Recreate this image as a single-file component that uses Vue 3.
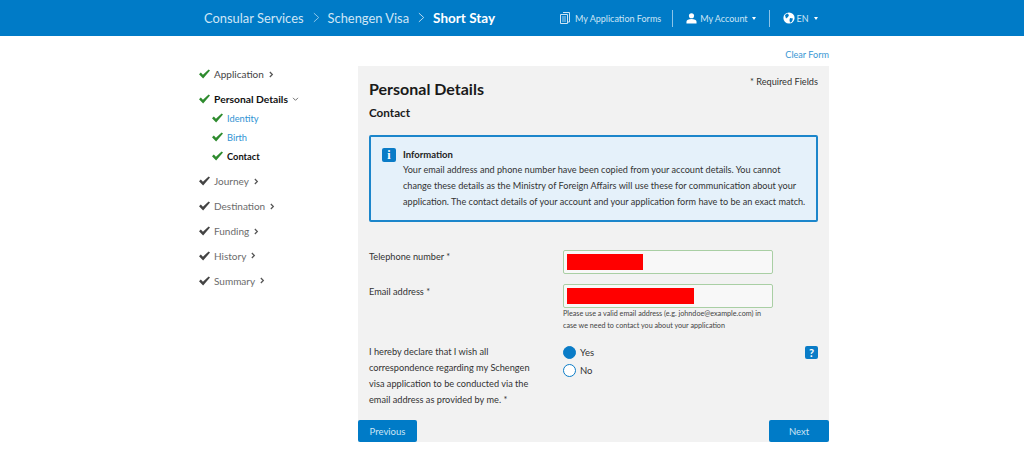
<script setup>
const mainTop = [{ t: 'Application', done: true }];
const subs = [
  { t: 'Identity', cls: 'link' },
  { t: 'Birth', cls: 'link' },
  { t: 'Contact', cls: 'cur' }
];
const rest = ['Journey', 'Destination', 'Funding', 'History', 'Summary'];
const tick = 'M0 5.200L2 3.400L4.300 5.700L10.500 0L12 1.300L4.500 10Z';
</script>

<template>
  <div class="page">
    <header class="top">
      <nav class="crumbs">
        <span class="c1">Consular Services</span>
        <svg class="sep" viewBox="0 0 8 12" width="7" height="11"><path d="M1 1l5.5 5L1 11" fill="none" stroke="#9fd0ee" stroke-width="1"/></svg>
        <span class="c2">Schengen Visa</span>
        <svg class="sep" viewBox="0 0 8 12" width="7" height="11"><path d="M1 1l5.5 5L1 11" fill="none" stroke="#cfe6f6" stroke-width="1"/></svg>
        <strong class="c3">Short Stay</strong>
      </nav>
      <div class="tools">
        <span class="tool t1">
          <svg viewBox="0 0 10 12" width="10" height="12"><path d="M3 .5h6.5v9.5H8M.5 2.5H7.5v9H.5z" fill="none" stroke="#cde5f5" stroke-width="1"/><path d="M2 5h4M2 7h4M2 9h4" stroke="#cde5f5" stroke-width=".8"/></svg>
          My Application Forms
        </span>
        <i class="div"></i>
        <span class="tool t2">
          <svg viewBox="0 0 12 12" width="11" height="11"><circle cx="6" cy="3" r="2.8" fill="#fff"/><path d="M.5 11.5V9.6C.5 7.6 3 6.6 6 6.6s5.500 1 5.500 3v1.900z" fill="#fff"/></svg>
          My Account
          <b class="caret"></b>
        </span>
        <i class="div"></i>
        <span class="tool t3">
          <svg viewBox="0 0 12 12" width="12" height="12"><circle cx="6" cy="6" r="5.600" fill="#fff"/><path d="M2 3l2.500-1.500L6 3 5 5 3 6.500zM7 6l3 .5-1 3-2 1.200L6.500 8z" fill="#007bc7"/></svg>
          EN
          <b class="caret"></b>
        </span>
      </div>
    </header>

    <div class="clear-row"><a class="clear">Clear Form</a></div>

    <div class="body">
      <aside class="side">
        <div v-for="m in mainTop" :key="m.t" class="item green">
          <svg class="tick" viewBox="0 0 12 10" width="11" height="10"><path :d="tick" fill="#2e8b2e"/></svg>
          <span>{{ m.t }}</span>
          <svg class="chev" viewBox="0 0 6 8" width="5" height="7"><path d="M1 1l3 3-3 3" fill="none" stroke="#555" stroke-width="1.500"/></svg>
        </div>
        <div class="item green active">
          <svg class="tick" viewBox="0 0 12 10" width="11" height="10"><path :d="tick" fill="#2e8b2e"/></svg>
          <span>Personal Details</span>
          <svg class="chev down" viewBox="0 0 8 6" width="7" height="5"><path d="M1 1l3 3 3-3" fill="none" stroke="#555" stroke-width="1"/></svg>
        </div>
        <div class="subs">
          <div v-for="s in subs" :key="s.t" class="sub" :class="s.cls">
            <svg class="tick" viewBox="0 0 12 10" width="11" height="10"><path :d="tick" fill="#2e8b2e"/></svg>
            <span>{{ s.t }}</span>
          </div>
        </div>
        <div class="rest">
          <div v-for="r in rest" :key="r" class="item grey">
            <svg class="tick" viewBox="0 0 12 10" width="11" height="10"><path :d="tick" fill="#444"/></svg>
            <span>{{ r }}</span>
            <svg class="chev" viewBox="0 0 6 8" width="5" height="7"><path d="M1 1l3 3-3 3" fill="none" stroke="#555" stroke-width="1.500"/></svg>
          </div>
        </div>
      </aside>

      <main class="panel">
        <div class="inner">
          <div class="head">
            <h1>Personal Details</h1>
            <span class="req">* Required Fields</span>
          </div>
          <h2>Contact</h2>
          <section class="info">
            <span class="info-ic">i</span>
            <div>
              <h3>Information</h3>
              <p>Your email address and phone number have been copied from your account details. You cannot<br>change these details as the Ministry of Foreign Affairs will use these for communication about your<br>application. The contact details of your account and your application form have to be an exact match.</p>
            </div>
          </section>
          <div class="row r-tel">
            <label>Telephone number *</label>
            <div class="field"><div class="input"><span class="red w1"></span></div></div>
          </div>
          <div class="row r-mail">
            <label>Email address *</label>
            <div class="field">
              <div class="input"><span class="red w2"></span></div>
              <p class="help">Please use a valid email address (e.g. johndoe@example.com) in<br>case we need to contact you about your application</p>
            </div>
          </div>
          <div class="row r-decl">
            <label class="decl">I hereby declare that I wish all<br>correspondence regarding my Schengen<br>visa application to be conducted via the<br>email address as provided by me. *</label>
            <div class="radios">
              <div class="radio"><i class="dot on"></i>Yes</div>
              <div class="radio"><i class="dot"></i>No</div>
            </div>
            <span class="q">?</span>
          </div>
        </div>
        <div class="btns">
          <button class="prev">Previous</button>
          <button class="next">Next</button>
        </div>
      </main>
    </div>
  </div>
</template>

<style scoped>
.page { width: 1024px; height: 469px; overflow: hidden; background: #fff; color: #333; font-family: Lato, "Noto Sans", sans-serif; font-size: 9.200px; }
.top { height: 36px; background: #007bc7; display: flex; align-items: center; padding-left: 204px; }
.crumbs { display: flex; align-items: center; font-size: 12.900px; color: #cfe6f6; width: 356px; padding-bottom: 1px; box-sizing: border-box; }
.sep { margin: 0 8px 0 9px; }
.crumbs .c3 { color: #fff; font-weight: 700; font-size: 13.500px; }
.tools { display: flex; align-items: center; font-size: 9px; color: #cde5f5; }
.tool { display: flex; align-items: center; gap: 5px; }
.div { width: 1px; height: 17px; background: #8cc4e8; margin: 0 13px; }
.t1 + .div { margin-left: 11px; }
.caret { width: 0; height: 0; border: 2.500px solid transparent; border-top: 3px solid #fff; border-bottom: 0; margin-left: -1px; }
.t2 { gap: 3px; }
.t2 .caret { margin-left: 1px; }
.t3 { gap: 2px; }
.t3 .caret { margin-left: 3px; }
.clear-row { width: 829px; height: 30px; display: flex; justify-content: flex-end; align-items: center; padding-top: 6px; box-sizing: border-box; }
.clear { color: #3a97d4; font-size: 9.100px; }
.body { display: flex; padding-left: 199px; }
.side { width: 159px; margin-top: -4px; }
.item { height: 24.900px; display: flex; align-items: center; font-size: 10px; color: #444; }
.tick { margin-right: 4px; flex: none; }
.chev { margin-left: 5px; }
.active { font-weight: 700; color: #111; font-size: 10.300px; }
.chev.down { margin-left: 4px; }
.subs { padding-left: 13px; margin-top: -3px; }
.sub { height: 19px; display: flex; align-items: center; font-size: 9.300px; }
.link { color: #2f93d3; }
.cur { color: #111; font-weight: 700; }
.rest { margin-top: 3px; }
.grey { color: #6b6b6b; }
.panel { width: 471px; height: 376px; background: #f2f2f2; display: flex; flex-direction: column; justify-content: space-between; }
.inner { padding: 0 11px; }
.head { display: flex; justify-content: space-between; padding-top: 11px; }
h1 { margin: 0; font-size: 16px; line-height: 24px; font-weight: 700; color: #1a1a1a; }
.req { font-size: 9.200px; color: #333; margin-top: -1px; }
h2 { margin: 1px 0 0; font-size: 11.700px; line-height: 20px; font-weight: 700; color: #1a1a1a; }
.info { margin-top: 13px; height: 87px; box-sizing: border-box; border: 2px solid #1c86cb; border-radius: 2px; background: #e5f1fa; display: flex; padding: 10px 11px 0; gap: 7px; }
.info-ic { width: 14px; height: 14px; margin-top: 1px; background: #0a7cc7; color: #fff; border-radius: 2px; flex: none; text-align: center; font: 700 12px/14px "Liberation Serif", serif; }
h3 { margin: 0; font-size: 9.500px; line-height: 15px; font-weight: 700; color: #222; }
.info p { margin: 0; line-height: 16px; font-size: 9.150px; color: #333; white-space: nowrap; }
.row { display: flex; }
.row label { width: 194px; flex: none; line-height: 16px; color: #333; }
.r-tel { margin-top: 28px; }
.r-tel label { margin-top: -1px; }
.r-mail { margin-top: 10px; }
.field { width: 210px; }
.input { height: 24px; box-sizing: border-box; border: 1px solid #a9cfa4; border-radius: 2px; background: #f8f8f8; padding: 3px; }
.red { display: block; height: 16px; background: #f00; }
.w1 { width: 76px; }
.w2 { width: 127px; }
.help { margin: 0; font-size: 7.200px; line-height: 12px; color: #444; white-space: nowrap; }
.r-decl { margin-top: 11px; position: relative; }
.decl { white-space: nowrap; padding-top: 1px; }
.radio { display: flex; align-items: center; height: 18px; gap: 4px; font-size: 9.500px; }
.dot { width: 11px; height: 11px; border: 1px solid #0a7cc7; border-radius: 50%; background: #fff; }
.dot.on { background: #0a7cc7; }
.q { position: absolute; right: 0; top: 3px; width: 13px; height: 13px; background: #0a7cc7; color: #fff; border-radius: 2px; text-align: center; font-size: 11px; line-height: 13px; font-weight: 700; }
.btns { display: flex; justify-content: space-between; }
button { height: 22px; border: 0; border-radius: 2px; background: #007bc7; color: #cde5f5; font: 9.500px Lato, sans-serif; padding: 0; }
.prev { width: 59px; }
.next { width: 60px; }
</style>
